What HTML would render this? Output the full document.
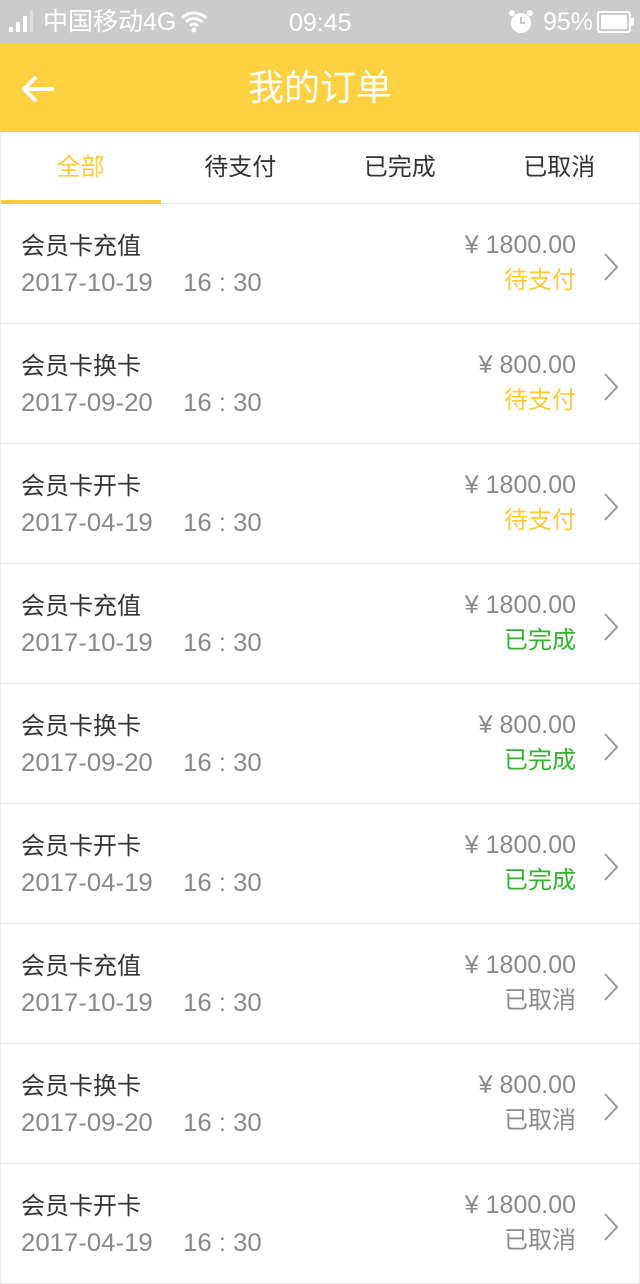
<!DOCTYPE html>
<html><head><meta charset="utf-8"><style>
*{margin:0;padding:0;box-sizing:border-box}
body{width:640px;height:1283px;overflow:hidden;background:#fff;font-family:"Liberation Sans","Noto Sans CJK SC",sans-serif}
.sb{height:44px;background:#cbcbcb;color:#fff;position:relative;font-size:25px}
.hd{height:88px;background:#ffd03f;position:relative;color:#fff}
.hd .t{position:absolute;left:0;right:0;top:22px;text-align:center;font-size:36px;line-height:44px}
.tabs{height:72px;display:flex;border-bottom:1px solid #e8e8e8;border-left:1px solid #eee;border-right:1px solid #eee}
.tabs div{flex:1;text-align:center;line-height:72px;font-size:24px;color:#333;position:relative}
.tabs .a{color:#ffc93a}
.tabs .a:after{content:"";position:absolute;left:0;right:0;bottom:-1px;height:4px;background:#ffc93a}
.row{height:120px;border-bottom:1px solid #e8e8e8;border-left:1px solid #eee;border-right:1px solid #eee;position:relative}
.n{position:absolute;left:20px;top:28px;font-size:24px;color:#333;line-height:30px}
.d,.tm{position:absolute;top:64px;font-size:25px;color:#888;line-height:30px;white-space:pre;transform-origin:left;transform:scaleX(1.03)}
.d{left:20px}.tm{left:182px}
.p{position:absolute;right:63px;top:26px;font-size:25px;color:#888;line-height:30px;white-space:pre}
.s{position:absolute;right:63px;top:62px;font-size:24px;line-height:30px}
.y{color:#ffc93a}.g{color:#2fb52a}.c{color:#888}
.ch{position:absolute;right:20px;top:48px}
</style></head><body>
<div class="sb">
<svg style="position:absolute;left:8px;top:10px" width="30" height="24"><rect x="1" y="17" width="4" height="5" fill="#fff"/><rect x="8" y="12" width="4" height="10" fill="#fff"/><rect x="15" y="6" width="4" height="16" fill="#fff"/><rect x="22" y="0" width="3" height="22" fill="#ddd"/></svg>
<span style="position:absolute;left:43px;top:8px;line-height:28px">中国移动4G</span>
<svg style="position:absolute;left:180px;top:10px" width="28" height="24"><path d="M2 8 A17 17 0 0 1 26 8 M6 12 A11 11 0 0 1 22 12 M10 16 A5 5 0 0 1 18 16" stroke="#fff" stroke-width="3" fill="none"/><circle cx="14" cy="20" r="2.5" fill="#fff"/></svg>
<span style="position:absolute;left:289px;top:8px;line-height:30px">09:45</span>
<svg style="position:absolute;left:508px;top:9px" width="26" height="26"><circle cx="13" cy="14" r="10" fill="#fff"/><path d="M13 8v6h4" stroke="#cbcbcb" stroke-width="2" fill="none"/><circle cx="4" cy="4" r="3" fill="#fff"/><circle cx="22" cy="4" r="3" fill="#fff"/></svg>
<span style="position:absolute;left:543px;top:8px;line-height:28px">95%</span>
<svg style="position:absolute;left:597px;top:11px" width="38" height="22"><rect x="1" y="1" width="32" height="20" rx="2" stroke="#fff" stroke-width="2" fill="none"/><rect x="4" y="4" width="26" height="14" fill="#fff"/><rect x="34" y="7" width="3" height="8" fill="#fff"/></svg>
</div>
<div class="hd"><svg style="position:absolute;left:20px;top:30px" width="36" height="30"><path d="M34 15H4M16 3L4 15l12 12" stroke="#fff" stroke-width="4" fill="none"/></svg><div class="t">我的订单</div></div>
<div class="tabs"><div class="a">全部</div><div>待支付</div><div>已完成</div><div>已取消</div></div>
<div id="l"></div>
<script>
var d=[["会员卡充值","2017-10-19","1800.00","待支付","y"],["会员卡换卡","2017-09-20","800.00","待支付","y"],["会员卡开卡","2017-04-19","1800.00","待支付","y"],["会员卡充值","2017-10-19","1800.00","已完成","g"],["会员卡换卡","2017-09-20","800.00","已完成","g"],["会员卡开卡","2017-04-19","1800.00","已完成","g"],["会员卡充值","2017-10-19","1800.00","已取消","c"],["会员卡换卡","2017-09-20","800.00","已取消","c"],["会员卡开卡","2017-04-19","1800.00","已取消","c"]];
var h="";d.forEach(function(r){h+='<div class="row"><div class="n">'+r[0]+'</div><div class="d">'+r[1]+'</div><div class="tm">16 : 30</div><div class="p">¥ '+r[2]+'</div><div class="s '+r[4]+'">'+r[3]+'</div><svg class="ch" width="16" height="30"><path d="M2 2l12 13L2 28" stroke="#999" stroke-width="2" fill="none"/></svg></div>'});
document.getElementById("l").innerHTML=h;
</script>
</body></html>
